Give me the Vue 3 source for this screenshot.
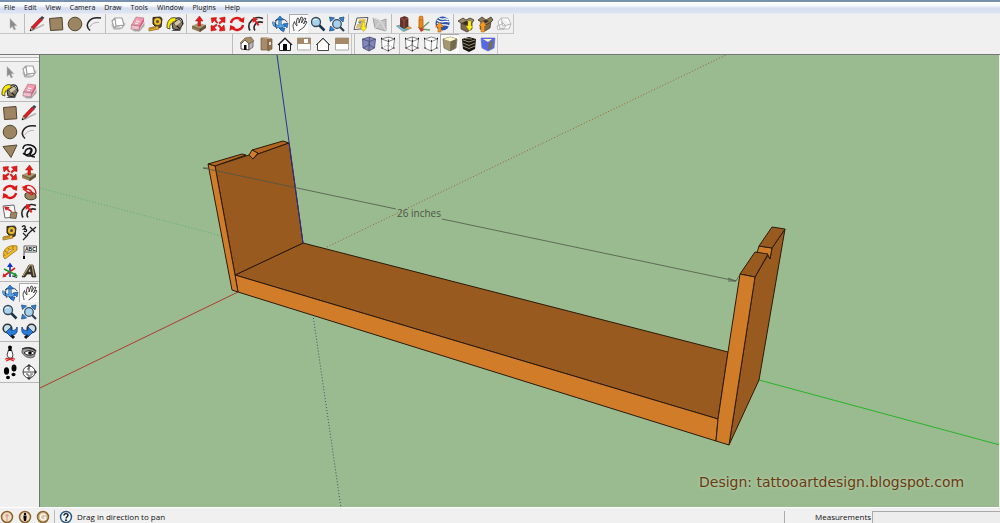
<script setup>
import { ref } from 'vue'

const menus = ['File', 'Edit', 'View', 'Camera', 'Draw', 'Tools', 'Window', 'Plugins', 'Help']
const mainTools = [
  ['select'],
  ['pencil', 'rectangle', 'circle', 'arc'],
  ['component', 'eraser', 'tape', 'paint'],
  ['pushpull', 'move', 'rotate', 'offset'],
  ['orbit', 'pan', 'zoom', 'extents'],
  ['map', 'terrain'],
  ['building', 'texture', 'globe'],
  ['download', 'upload', 'share'],
]
const viewTools = [['iso', 'top', 'front', 'right', 'back', 'left']]
const styleTools = [
  ['xray', 'backedges'],
  ['wireframe', 'hidden', 'shaded', 'textured', 'mono'],
]
const sideTools = [
  ['select', 'component', 'paint', 'eraser'],
  ['rectangle', 'pencil', 'circle', 'arc', 'polygon', 'freehand'],
  ['move', 'pushpull', 'rotate', 'follow', 'scale', 'offset'],
  ['tape', 'dimension', 'protractor', 'text', 'axes', 'text3d'],
  ['orbit', 'pan', 'zoom', 'extents', 'previous', 'next'],
  ['position', 'look', 'walk', 'section'],
]
const tool = ref('pan')
const face = ref('shaded')
const measurement = ref('')
</script>

<template>
  <svg class="sprite" aria-hidden="true">
    <symbol id="select" viewBox="0 0 18 18"><path d="M6 3.500v10l2.300-2L10 15l1.700-.8-1.700-3.400h3z" fill="#8b8b8b" stroke="#bbb" stroke-width=".5" /></symbol>
    <symbol id="pencil" viewBox="0 0 18 18"><path d="m4 15.500 12-6" stroke="#b5b5b5" stroke-width="1.500" /><path d="m2 16 1.500-4 2.200 2z" fill="#eac28c" stroke="#222" stroke-width=".6" /><path d="m3.500 12 8.500-9 2.400 2-8.700 9z" fill="#e31b22" stroke="#5c1115" stroke-width=".6" /><path d="m12 3 2-2 2.400 1.800-2 2.200z" fill="#444" /><path d="M2 16h1.500l-.9-2z" /></symbol>
    <symbol id="rectangle" viewBox="0 0 18 18"><path d="m2.500 3.500 12.500-1 .8 12.300-12.300.7z" fill="#9c8560" stroke="#54462f" /></symbol>
    <symbol id="circle" viewBox="0 0 18 18"><circle cx="9" cy="9" r="6.800" fill="#9c8560" stroke="#54462f" /></symbol>
    <symbol id="polygon" viewBox="0 0 18 18"><path d="M2 4.500 16 3l-6 12.500z" fill="#9c8560" stroke="#54462f" /></symbol>
    <symbol id="arc" viewBox="0 0 18 18"><path d="M5 15.500C-1 10 4 1 16 3" fill="none" stroke="#222" stroke-width="1.500" /><path d="M5 12c1-3 5-5 9-4.500" fill="none" stroke="#b0b0b0" /></symbol>
    <symbol id="freehand" viewBox="0 0 18 18"><path d="M3 7C3 2 9 2 13 4s4 7 0 9-9 1-8-3 7-5 6-1-6 5-8 2m5-4c4-3 5 2 3 4s0 4 4 4" fill="none" stroke="#111" stroke-width="1.400" /></symbol>
    <symbol id="component" viewBox="0 0 18 18"><path d="m2 10 4-3 9 0 2 2-6 6-6 0z" fill="#ccc" /><path d="M6 3h7l2 7-8 1zM6 3 3 6l2 7 2-2m-2 2 8 0 2-3" fill="#fff" stroke="#a0a0a0" stroke-width="1.200" /></symbol>
    <symbol id="eraser" viewBox="0 0 18 18"><path d="m4 15 8-1 4.500-7v4l-5 5.500-5 0z" fill="#aaa" /><path d="m8 2 8 1-4.500 8-8-1z" fill="#ee9cae" stroke="#b77180" stroke-width=".6" /><path d="M3.500 10 3 14l8 1 .5-4z" fill="#f3c0ca" stroke="#956a72" stroke-width=".6" /><path d="M11.500 11 16 3v3.500L11 15z" fill="#d55f7f" /><path d="m8 6 3.500.6M7 8l3 .6" stroke="#fff" /></symbol>
    <symbol id="tape" viewBox="0 0 18 18"><path d="M6 2.500 13.500 2 15 4l-1 8-4 1-4-4z" fill="#504733" stroke="#2e2818" /><circle cx="10.500" cy="6.500" r="3.500" fill="#f2bd1e" /><circle cx="10.500" cy="6.500" r="1.500" fill="#4c4c4c" /><path d="m11 11-9 2v3l10-2z" fill="#f2b728" stroke="#826119" stroke-width=".7" /><path d="M4 13v1.500m2-2V14m2-2v1.500" stroke="#544" stroke-width=".7" /></symbol>
    <symbol id="paint" viewBox="0 0 18 18"><path d="m6 9 7-5 4 5-4 6-6-1z" fill="#857a60" stroke="#222" /><path d="M9 4c5-3 8 0 8 5M8 8l6 6" fill="none" stroke="#222" stroke-width="1.200" /><path d="m8 8 5-3.500L15 7l-5 4z" fill="#d3c8a8" /><path d="M10 3C4 1 .5 7 1 13l3 1c-1-4 1-7 6-8z" fill="#ffea00" stroke="#333" stroke-width=".8" /><path d="M5 15h8l3-3-2 4H7z" fill="#555" /></symbol>
    <symbol id="pushpull" viewBox="0 0 18 18"><path d="m2 11 6-3 8 2-6 4z" fill="#ae9872" /><path d="m2 11 8 3v3l-8-3z" fill="#927a52" /><path d="m10 14 6-4v3l-6 4z" fill="#665437" /><path d="m2 11 8 3 6-4M10 14v3" fill="none" stroke="#443820" stroke-width=".6" /><path d="M8 11V6H5.500l4-5 3.500 5h-2.500v5z" fill="#e91818" stroke="#8b1c15" stroke-width=".5" /></symbol>
    <symbol id="move" viewBox="0 0 18 18"><g fill="#ed1818" stroke="#a11212" stroke-width=".5"><path d="M7.500 8 5.500 5.500 3 8 2 3l5.500-.5L7 5l2 3z" /><path d="m10 7.500 2.500-2L10.500 3 16 2l0 5.500L13.500 7 10.500 9z" /><path d="m10.500 10 2 2.500L15 10l1 5.500-5.500.5.500-2.500-2-3z" /><path d="m8 10.500-2.500 2 2 2.500L2 16v-5.500l2.500.5 3-2z" /></g></symbol>
    <symbol id="rotate" viewBox="0 0 18 18"><g fill="none" stroke="#df1414" stroke-width="2.400"><path d="M3 8C4 2.500 11 1.500 14 5.500M15 10C14 15.500 7 16.500 4 12.500" /></g><path d="m16.500 2-.8 6-5-2.200zM1.500 16l.8-6 5 2.200z" fill="#df1414" /></symbol>
    <symbol id="offset" viewBox="0 0 18 18"><path d="M3 15.500C-1 8 7 0 16 3.500M8 15.500C5 11 10 5 16 7.500" fill="none" stroke="#292929" stroke-width="1.600" /><path d="M11 11 7.500 6.500 5.500 8 6 2l5 2-2 1.500 3.500 4z" fill="#e31c1c" /></symbol>
    <symbol id="follow" viewBox="0 0 18 18"><path d="M5 11c3-3 9-2 11 1v3c-4 3-9 2-11-1z" fill="#9c8560" stroke="#443820" /><path d="M5 3c6-2 11 2 11 8M6 6c4 0 6 2 7 6M3 6l9 6" fill="none" stroke="#e31818" stroke-width="1.300" /><path d="m1.500 4 6-2-1 6z" fill="#e31818" /></symbol>
    <symbol id="scale" viewBox="0 0 18 18"><path d="m2 4 11-1 2 12-11 1z" fill="#fff" stroke="#666" /><path d="m10 10 6 .5-1 6-6-.5z" fill="#9c8560" stroke="#54462f" stroke-width=".7" /><path d="M10 10 6 7.500 5 9 3 4.500 8.500 5 7.500 6.500 11 9z" fill="#e31818" /></symbol>
    <symbol id="orbit" viewBox="0 0 18 18"><g fill="none" stroke="#1b4d8f" stroke-width="3"><path d="M9 3v7c0 3 1 4 3 5M3 7c-2 4 6 6 11 3" /></g><g fill="none" stroke="#5aabee" stroke-width="1.800"><path d="M9 3v7c0 3 1 4 3 5M3 7c-2 4 6 6 11 3" /></g><path d="M4 6c3-3 10-3 12 1M6 4c-2 3-2 7 0 10" fill="none" stroke="#222" stroke-width=".8" /><path d="m9 1 3.500 4h-7zM17 8l-1 5-4-4zM8 13h6l-1.500 4z" fill="#2782df" stroke="#18467c" stroke-width=".6" /></symbol>
    <symbol id="pan" viewBox="0 0 18 18"><path d="M4 16c0-2-1-3-1-6l1.500-3.500 1 3L7 11l-.5-5L7.500 3 9 4l0 4 2-6 1.500.5L11.500 8l3-5 1.500.5L13.500 9l2.500-3 1 1-3 5-4 3-1.500 1" fill="#fff" stroke="#383838" stroke-width=".9" /></symbol>
    <symbol id="zoom" viewBox="0 0 18 18"><path d="m9.500 9.500 6 6" stroke="#1a3348" stroke-width="2.500" /><circle cx="7" cy="7" r="4.500" fill="#a6d2ed" stroke="#37485a" stroke-width="1.300" /><path d="M4 6c1-2 3-2 4-1" fill="none" stroke="#edffff" /></symbol>
    <symbol id="extents" viewBox="0 0 18 18"><path d="m1.500 2 5 1-4 3.500zM16 2l-5 1 4 4zM1.500 16l5-1-4-4z" fill="#3480cf" stroke="#205486" stroke-width=".8" /><path d="m12 12 4 4" stroke="#293c4e" stroke-width="2.200" /><circle cx="9" cy="9" r="4.300" fill="#a6d2ed" stroke="#37485a" stroke-width="1.200" /></symbol>
    <symbol id="previous" viewBox="0 0 18 18"><path d="m9 12 4 4" stroke="#111" stroke-width="3" /><circle cx="6.500" cy="6.500" r="4.300" fill="#c6e0e9" stroke="#333" stroke-width="1.600" /><path d="m5 10 5-5v3c3 1 5 0 6-3 1 6-1 8-6 8v2z" fill="#287bd6" stroke="#123c77" stroke-width=".8" /></symbol>
    <symbol id="next" viewBox="0 0 18 18"><path d="m9 12-4 4" stroke="#111" stroke-width="3" /><circle cx="11.500" cy="6.500" r="4.300" fill="#c6e0e9" stroke="#333" stroke-width="1.600" /><path d="M13 10 8 5v3C5 9 3 8 2 5c-1 6 1 8 6 8v2z" fill="#287bd6" stroke="#123c77" stroke-width=".8" /></symbol>
    <symbol id="map" viewBox="0 0 18 18"><path d="m5 3 11-.5-2.500 11L2 14.500z" fill="#fff" stroke="#555" /><path d="m5 9 8-2-1 5-8 1z" fill="#d9bd7d" /><path d="m7 4.500 7-.5-1 3-7 1z" fill="#eac23d" /><path d="m6 7 4-1-2 3z" fill="#5c86b8" /><path d="M10 7h3v5h2l-3.500 4.500L8 12h2z" fill="#ffed16" stroke="#9a8c22" stroke-width=".5" /></symbol>
    <symbol id="terrain" viewBox="0 0 18 18"><path d="m2 3 8 3 5-2v12L4 13z" fill="#c4c4c4" stroke="#a0a0a0" /><path d="m2 3 8 3-6 7m6-7 5 10" fill="none" stroke="#e0e0e0" /></symbol>
    <symbol id="building" viewBox="0 0 18 18"><path d="m1.500 11 8-2 7 4-8 3.500z" fill="#6bad88" stroke="#61756a" stroke-width=".6" /><path d="m2 11 5-1 3 5-2 1.500z" fill="#79b6d8" /><path d="m5.500 3 4-1.500L13 3v8l-4 2.500-3.500-2z" fill="#6b3027" stroke="#421d1a" stroke-width=".7" /><path d="m5.500 3 3.500 2v8m0-8 4-2" fill="none" stroke="#985743" /><path d="m12 13 4 0" stroke="#e69640" stroke-width="2" /></symbol>
    <symbol id="texture" viewBox="0 0 18 18"><path d="m7 14 8-7m-8 7 9 1" stroke="#64a06c" stroke-width="1.500" /><path d="m4 12 3 5 3-2-2-4z" fill="#c54129" /><path d="M5 5c0-2 4-2 4 0v8H5z" fill="#ef8916" stroke="#ab5d15" stroke-width=".8" /><circle cx="7" cy="3" r="2" fill="#ef8916" stroke="#ab5d15" stroke-width=".6" /></symbol>
    <symbol id="globe" viewBox="0 0 18 18"><circle cx="9.500" cy="8.500" r="7" fill="#2a52ae" /><path d="M4 5c4 4 8 0 12 2M4 8c5 4 8 0 12 3M6 3c4 3 6-1 9 2" stroke="#fff" stroke-width="1.300" fill="none" /><path d="M5 17v-5H2.500l4-5 4 5H8v5z" fill="#f7991c" stroke="#a9590c" stroke-width=".5" /></symbol>
    <symbol id="download" viewBox="0 0 18 18"><path d="m4 8 5 2 6-2v6l-5 3-6-3z" fill="#7b6a4d" stroke="#3f3625" stroke-width=".7" /><path d="m4 8-3-2 5-3 3 2 4-2 4 2-2 3-6 2z" fill="#9b8967" stroke="#3f3625" stroke-width=".8" /><path d="m5 8 4-2 5 1-5 3z" fill="#362d20" /><path d="M11 6h3v5h2l-3.500 5L9 11h2z" fill="#fff11a" stroke="#a19b27" stroke-width=".4" /></symbol>
    <symbol id="upload" viewBox="0 0 18 18"><path d="m5 7 5 2 5-3-1 7-5 3-5-2z" fill="#7b6a4d" stroke="#3f3625" stroke-width=".7" /><path d="m5 7-3-2 4-3 4 3 5-3 2 3-2 2-5 3z" fill="#8c7958" stroke="#3f3625" stroke-width=".8" /><path d="m6 6 4-1 3 1-3 2z" fill="#362d20" /><path d="M5 17v-6H3l4-5 3.500 5h-2v6z" fill="#f7991c" stroke="#a45c12" stroke-width=".4" /></symbol>
    <symbol id="share" viewBox="0 0 18 18"><path d="M6 3h7l3 6-8 2zM6 3 3 7l2 7 9 0 2-5M2 11l5-2V7l4 4-3 4v-2l-5 2z" fill="#fff" stroke="#b8b8b8" /></symbol>
    <symbol id="iso" viewBox="0 0 18 18"><path d="m3 9 4-4 4 4v6l-8-1z" fill="#fff" stroke="#222" stroke-width=".8" /><path d="m11 9 4-3v6l-4 3z" fill="#bbb" stroke="#555" stroke-width=".8" /><path d="m2 8 5-5 6-1 3 4-5 3-4-4-4 4z" fill="#a58b6a" stroke="#6b5944" stroke-width=".6" /><path d="M6 10h2.500v5H6z" /></symbol>
    <symbol id="top" viewBox="0 0 18 18"><path d="M4 3h7v12H4z" fill="#a88b68" stroke="#725838" stroke-width=".7" /><path d="m11 3 4 1v10l-4 2z" fill="#8f7352" stroke="#725838" stroke-width=".7" /><path d="m4 3 4-1 7 2-4 0z" fill="#cdb18b" /><path d="M12 7h2v3h-2z" fill="#ddd" /></symbol>
    <symbol id="front" viewBox="0 0 18 18"><path d="M3.500 9v6.500h11V9L9 3.500z" fill="#fff" stroke="#222" /><path d="m2 10 7-7 7 7" fill="none" stroke="#222" stroke-width="1.200" /><path d="M7 9h4v6H7z" /></symbol>
    <symbol id="right" viewBox="0 0 18 18"><path d="M2.500 3h13v12h-13z" fill="#fff" stroke="#aaa" /><path d="M2 3h14v6H2z" fill="#a68a67" /><path d="M9 4h4v4H9z" fill="#fff" /></symbol>
    <symbol id="back" viewBox="0 0 18 18"><path d="M3.500 9v6.500h11V9L9 3.500z" fill="#fff" stroke="#333" stroke-width=".9" /><path d="m2 10 7-7 7 7" fill="none" stroke="#444" /></symbol>
    <symbol id="left" viewBox="0 0 18 18"><path d="M2.500 3h13v12h-13z" fill="#fff" stroke="#aaa" /><path d="M2 3h14v6H2z" fill="#a68a67" /></symbol>
    <symbol id="xray" viewBox="0 0 18 18"><path d="m2.500 4 7-2 6 2-1 9-5.500 3L3 13z" fill="#8187bb" stroke="#474d70" stroke-width=".8" /><path d="m2.500 4 7 2.500 6-2.500M9.500 6.500 9 16M3 13l6-3 5.500 3M9.500 2 9 10" fill="none" stroke="#474d70" stroke-width=".8" /></symbol>
    <symbol id="backedges" viewBox="0 0 18 18"><path d="m2.500 4 7-2 6 2-1 9-5.500 3L3 13z" fill="#fff" stroke="#666" stroke-width=".8" /><path d="m2.500 4 7 2.500 6-2.500M9.500 6.500 9 16" fill="none" stroke="#555" stroke-width=".8" /><path d="m3 13 6-3 5.500 3M9.500 2 9 10" fill="none" stroke="#888" stroke-dasharray="1 1" /><path d="M2 3.500h1M9 6h1m5-2.500h1M9 15.500h1M2.500 13h1m11 0h1" stroke="#111" stroke-width="1.500" /></symbol>
    <symbol id="wireframe" viewBox="0 0 18 18"><path d="m2.500 4 7-2 6 2-1 9-5.500 3L3 13z" fill="#fff" stroke="#666" stroke-width=".8" /><path d="m2.500 4 7 2.500 6-2.500M9.500 6.500 9 16M3 13l6-3 5.500 3M9.500 2 9 10" fill="none" stroke="#666" stroke-width=".8" /><path d="M2 3.500h1M9 6h1m5-2.500h1M9 15.500h1M2.500 13h1m11 0h1" stroke="#111" stroke-width="1.500" /></symbol>
    <symbol id="hidden" viewBox="0 0 18 18"><path d="m2.500 4 7-2 6 2-1 9-5.500 3L3 13z" fill="#fff" stroke="#666" stroke-width=".8" /><path d="m2.500 4 7 2.500 6-2.500M9.500 6.500 9 16" fill="none" stroke="#777" stroke-width=".8" /><path d="M2 3.500h1M9 6h1m5-2.500h1M9 15.500h1M2.500 13h1m11 0h1" stroke="#111" stroke-width="1.500" /></symbol>
    <symbol id="shaded" viewBox="0 0 18 18"><path d="m2 4 7.500-2 6.500 2-1 9-6 3-6-3z" fill="#a49870" stroke="#70684d" stroke-width=".7" /><path d="m2.500 4 7-2 6 2-6 2.500z" fill="#fff9c8" /><path d="M9.500 6.500 15.500 4l-1 9L9 16z" fill="#736a4b" /></symbol>
    <symbol id="textured" viewBox="0 0 18 18"><path d="m2 4 7-2 7 2-1 10-6 3-6-3z" fill="#17150f" /><path d="m3 5 6 2 6-2M3 8l6 2.500L15 8M3 11l6 2.500 6-2.500M5 3.500l7 .5" fill="none" stroke="#b4ac85" stroke-width=".8" /></symbol>
    <symbol id="mono" viewBox="0 0 18 18"><path d="m2 3 14 0-1 10-6 3-6-3z" fill="#5568e5" stroke="#6370c9" stroke-width=".7" /><path d="m4 4 9 0-4 3z" fill="#fff9ba" /><path d="m9.500 8 4.500-3-1 8-4 2z" fill="#756e58" /></symbol>
    <symbol id="dimension" viewBox="0 0 18 18"><path d="m3 9 4 4m-4 3 5-5M10 3l5 5m-5 0 6-5M7 11l5-5" stroke="#222" stroke-width="1.200" /><path d="M2 3c2-3 5 0 2 2 4 0 3 4 0 2" fill="none" stroke="#111" stroke-width="1.300" /></symbol>
    <symbol id="protractor" viewBox="0 0 18 18"><path d="M2.500 14C1 7 7 1 16 3l0 4-12 9z" fill="#f3ba22" stroke="#8a6919" stroke-width=".7" /><path d="M6 11c0-3 3-5 7-5z" fill="#f4f4f4" stroke="#8a6919" stroke-width=".7" /><path d="M3 12h1.500M4 8l1.500 1M7 5l1 1.500M12 3v2" stroke="#604b20" stroke-width=".7" /></symbol>
    <symbol id="text" viewBox="0 0 18 18"><path d="M4 3h12.500v6H4zM4 9v6" fill="#fff" stroke="#333" stroke-width=".8" /><path d="M3 13h2v3H3z" /><text x="5" y="8" font-family="Liberation Sans, sans-serif" font-size="5" font-weight="700">ABC</text></symbol>
    <symbol id="axes" viewBox="0 0 18 18"><path d="M9 15V4" stroke="#1732d1" stroke-width="1.600" /><path d="m6 5 3-4.500L12 5z" fill="#1732d1" /><path d="m3 14 11-8" stroke="#e21b1b" stroke-width="1.600" /><path d="m1.500 15.500 1-4.500 3 3.500z" fill="#e21b1b" /><path d="m3 7 12 6" stroke="#13982c" stroke-width="1.600" /><path d="m17 14.500-5 0 2-4z" fill="#13982c" /><path d="m11 14 5 1.500" stroke="#333" /></symbol>
    <symbol id="text3d" viewBox="0 0 18 18"><path d="M2 15 9 3h4l3 12h-4l-1-3H7l-2 3zM8 10h3l-1-4z" fill="#3c3526" stroke="#29251b" fill-rule="evenodd" stroke-width=".7" /><path d="m3 14 7-11h2l2 11" fill="none" stroke="#b5a37b" stroke-width="1.200" /></symbol>
    <symbol id="position" viewBox="0 0 18 18"><path d="m5 14 8 3m0-3-8 3M4 15h10" stroke="#e31818" /><path d="M7.500 6h3l1.500 5-1 3H7.500L6 11z" fill="#fff" stroke="#111" stroke-width=".8" /><circle cx="9" cy="3.500" r="2" /><path d="M7.500 5h3v2h-3z" /></symbol>
    <symbol id="look" viewBox="0 0 18 18"><path d="M2 6c4-4 12-3 14 1l-2 6c-5 2-9 0-12-4z" fill="#999" stroke="#444" stroke-width=".7" /><path d="M4 9c3-3 7-3 11 0-4 3-7 3-11 0z" fill="#fff" stroke="#222" /><circle cx="10" cy="9" r="1.800" /><path d="M2 5c5-2 11-1 14 2" fill="none" stroke="#222" stroke-width="1.300" /></symbol>
    <symbol id="walk" viewBox="0 0 18 18"><ellipse cx="5.500" cy="8" rx="2.600" ry="3.800" /><ellipse cx="13" cy="5" rx="2.500" ry="3.500" /><ellipse cx="7" cy="14.500" rx="2" ry="1.800" /><ellipse cx="12.500" cy="11.500" rx="2" ry="1.700" /></symbol>
    <symbol id="section" viewBox="0 0 18 18"><path d="m9 1 8 8-8 8-2-2V3z" fill="#222" /><circle cx="9" cy="9" r="6" fill="#fff" stroke="#444" /><path d="M3 9h12M9 3v3m0 6v3" stroke="#444" /><path d="M10 5H8v2h2M6 11h2v2m2-2h3m-3 2h2" fill="none" stroke="#555" /></symbol>
  </svg>

  <div class="app">
    <nav class="menus">
      <button v-for="m in menus" :key="m" type="button">{{ m }}</button>
    </nav>

    <div class="bars">
      <div class="bar main-bar">
        <div v-for="(group, i) in mainTools" :key="i" class="group">
          <button v-for="id in group" :key="id" type="button" class="tool" :class="{ on: tool === id }" :aria-label="id" @click="tool = id">
            <svg><use :href="'#' + id" /></svg>
          </button>
        </div>
      </div>
      <div class="second">
        <div class="bar">
          <div v-for="(group, i) in viewTools" :key="i" class="group">
            <button v-for="id in group" :key="id" type="button" class="tool" :aria-label="id"><svg><use :href="'#' + id" /></svg></button>
          </div>
        </div>
        <div class="bar">
          <div v-for="(group, i) in styleTools" :key="i" class="group">
            <button v-for="id in group" :key="id" type="button" class="tool" :class="{ on: face === id }" :aria-label="id" @click="face = id">
              <svg><use :href="'#' + id" /></svg>
            </button>
          </div>
        </div>
      </div>
    </div>

    <div class="work">
      <aside class="side">
        <div class="grip"></div>
        <div v-for="(group, i) in sideTools" :key="i" class="pair">
          <button v-for="id in group" :key="id" type="button" class="tool" :class="{ on: tool === id }" :aria-label="id" @click="tool = id">
            <svg><use :href="'#' + id" /></svg>
          </button>
        </div>
      </aside>

      <main class="view">
        <svg class="scene" viewBox="40 55 959 452" preserveAspectRatio="xMidYMid slice">
          <g fill="none">
            <path d="m40 188 182 48" stroke="#5dae6c" stroke-dasharray="1 2" />
            <path d="M327 247 726 55" stroke="#a0603c" stroke-dasharray="1 2" />
            <path d="m313 315 28 193" stroke="#3e5080" stroke-dasharray="1 2" />
            <path d="m40 388 198-96" stroke="#b03a31" />
            <path d="m759 380 241 65" stroke="#28b428" />
          </g>
          <g stroke="#2b1a0a" stroke-width="1" stroke-linejoin="round">
            <path d="m235 275 68-32 425 109-10 67z" fill="#985a1e" />
            <path d="m235 275 483 144-2 22-478-149z" fill="#d17c28" />
            <path d="m208 164 34-10 4 1-31 11z" fill="#b2651f" />
            <path d="m252 150 31-9 6 2-31 11z" fill="#b2651f" />
            <path d="m215 166 34-11 4 4 5-5 31-11 14 100-68 32z" fill="#985a1e" />
            <path d="m252 150 6 3-5 6-4-4z" fill="#d17c28" />
            <path d="m208 164 7 2 20 109 3 17-6-2z" fill="#d17c28" />
            <path d="m755 277 13-22 2 4 2-11 13-19-26 151-30 65z" fill="#985a1e" />
            <path d="m759 246 13 2-2 11-2-4-11-2z" fill="#d17c28" />
            <path d="m772 227 13 2-13 19-13-2z" fill="#985a1e" />
            <path d="m740 274 15-22 13 2-13 23z" fill="#985a1e" />
            <path d="M740 274l15 3-26 168-13-4 2-22 10-67z" fill="#d17c28" />
          </g>
          <path d="m277 55 26 188" stroke="#302c9f" />
          <g fill="none" stroke="#4e5748" stroke-width=".8">
            <path d="m203 168 193 41m46 10 294 62 3-5M203 168h7" />
            <path d="m728 278 8 3-8 0" />
          </g>
          <text x="397" y="217" class="length">26 inches</text>
          <text x="699" y="487" class="credit">Design: tattooartdesign.blogspot.com</text>
        </svg>
      </main>
    </div>

    <footer class="status">
      <div class="badges">
        <svg class="badge" viewBox="0 0 14 14"><circle cx="7" cy="7" r="5.500" fill="#f1dfc4" stroke="#8d632b" stroke-width="1.500" /><circle cx="7" cy="5.500" r="1.700" fill="#e0a598" /><path d="M7 7v4" stroke="#c99" /></svg>
        <svg class="badge" viewBox="0 0 14 14"><circle cx="7" cy="7" r="5.500" fill="#f1dfc4" stroke="#8d632b" stroke-width="1.500" /><circle cx="7" cy="4" r="1.200" /><path d="M5.500 5.500h3V8L8 11H6l-.5-3z" /></svg>
        <svg class="badge" viewBox="0 0 14 14"><circle cx="7" cy="7" r="5.500" fill="#d8c39d" stroke="#8d632b" stroke-width="1.500" /><path d="M9.500 5C7 3 4 5 4.500 7.500S8 10.500 9.500 9V7.500H8" fill="none" stroke="#fff" stroke-width="1.300" /></svg>
      </div>
      <svg class="badge" viewBox="0 0 14 14"><circle cx="7" cy="7" r="5.500" fill="#eef6fc" stroke="#28577e" stroke-width="1.400" /><path d="M5 5.500C5 3 9 3 9 5.300 9 6.700 7 6.700 7 8.500" fill="none" stroke="#111" stroke-width="1.400" /><circle cx="7" cy="10.200" r=".9" /></svg>
      <span class="hint">Drag in direction to pan</span>
      <div class="measure">
        <label for="measure">Measurements</label>
        <input id="measure" v-model="measurement" type="text" />
      </div>
    </footer>
  </div>
</template>

<style>
body { background: #f0f0f0; }
</style>

<style scoped>
* { box-sizing: border-box; }
.sprite { display: none; }
.app {
  display: flex;
  flex-direction: column;
  height: 100vh;
  background: #f0f0f0;
  color: #111;
  font: 7px/12px "Open Sans", "Noto Sans", sans-serif;
}
button { margin: 0; border: 0; background: none; color: inherit; font: inherit; }
.menus {
  display: flex;
  height: 14px;
  border-top: 2px solid #7690ae;
  background: linear-gradient(#fff 0, #f4f7fc 4px, #d5ddee 6px, #dde4f2 11px, #eef0f5);
}
.menus button { padding: 0 5px 0 4px; }
.bars { border-bottom: 1px solid #777; }
.bar {
  display: flex;
  width: max-content;
  height: 20px;
  border: 1px solid #c6c6c6;
  border-width: 0 1px 1px 0;
}
.main-bar { padding-left: 3px; }
.second { display: flex; height: 20px; margin-left: 232px; border-left: 1px solid #bbb; }
.second .bar { padding-left: 4px; border-bottom: 0; }
.second .bar + .bar { margin-left: 2px; border-left: 1px solid #bbb; }
.group { display: flex; }
.group + .group { margin-left: 2px; padding-left: 2px; border-left: 1px solid #bcbcbc; }
.tool {
  display: grid;
  place-items: center;
  width: 19px;
  height: 19px;
  padding: 0;
}
.tool svg { width: 18px; height: 18px; }
.tool.on { background: #fafafa; box-shadow: inset 1px 1px #aaa, inset -1px -1px #fff; }
.work { display: flex; flex: 1; min-height: 0; padding-right: 1px; }
.side { width: 39px; flex: none; }
.grip {
  height: 5px;
  margin-top: 2px;
  border: solid #bbb;
  border-width: 1px 0;
  background: #f6f6f6;
}
.pair {
  display: grid;
  grid-template-columns: 19px 19px;
  padding-bottom: 1px;
  border-bottom: 1px solid #b8b8b8;
  margin-bottom: 1px;
}
.view { flex: 1; min-width: 0; border-left: 1px solid #6d776a; background: #9abb8f; }
.scene { display: block; width: 100%; height: 100%; }
.length { fill: #4c5547; font: 10px "Open Sans", "Noto Sans", sans-serif; }
.credit {
  fill: #693a11;
  font: 14px "DejaVu Sans", sans-serif;
  text-shadow: 0 0 3px #c7d9c0;
}
.status {
  display: flex;
  align-items: center;
  height: 16px;
  padding-top: 3px;
  border-top: 1px solid #fff;
  font-size: 8px;
}
.badges { display: flex; gap: 4px; padding-right: 4px; border-right: 1px solid #bbb; }
.badge { display: block; width: 14px; height: 14px; }
.badges + .badge { margin: 0 4px; }
.measure { display: flex; flex: 0 0 216px; margin-left: auto; padding-left: 30px; border-left: 1px solid #aaa; }
.measure input {
  flex: 1;
  min-width: 0;
  height: 13px;
  margin-left: 1px;
  padding: 0 2px;
  border: 1px solid #aaa;
  border-width: 1px 0 0 1px;
  background: #ededed;
  font: inherit;
}
</style>
